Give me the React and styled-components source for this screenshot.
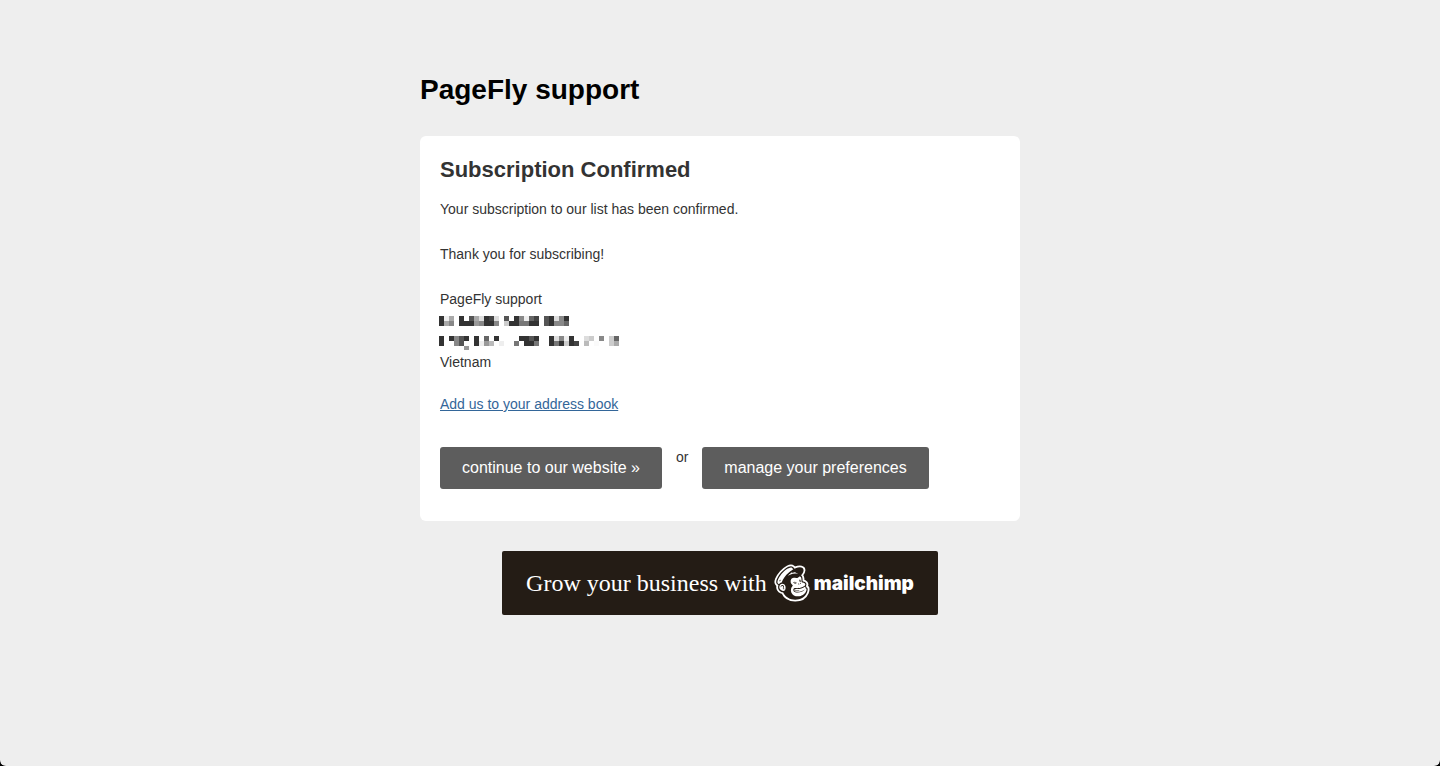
import React from 'react'
import styled, { createGlobalStyle } from 'styled-components'
import { FaMailchimp } from 'react-icons/fa'

const GlobalStyle = createGlobalStyle`
    * {
        box-sizing: border-box;
    }

    html {
        background: #000;
    }

    body {
        margin: 0;
        font-family: "Liberation Sans", Arial, sans-serif;
        font-size: 14px;
        line-height: 21px;
        color: #333;
    }
`

const Page = styled.div`
    min-height: 100vh;
    padding: 68px 20px 40px;
    background: #eee;
    border-radius: 0 0 6px 6px;
`

const Container = styled.main`
    max-width: 600px;
    margin: 0 auto;
    display: flex;
    flex-direction: column;
`

const Title = styled.h1`
    margin: 0 0 24px;
    font-size: 28px;
    line-height: 44px;
    color: #000;
`

const Card = styled.section`
    padding: 20px 20px 32px;
    background: #fff;
    border-radius: 6px;
`

const Heading = styled.h2`
    margin: 0 0 15px;
    font-size: 22px;
    line-height: 28px;
`

const Text = styled.p`
    margin: 0 0 24px;
`

const Address = styled.address`
    margin-bottom: 21px;
    font-style: normal;
`

const Mosaic = styled.svg`
    display: block;
    margin: 6px 0 2px -1px;
    shape-rendering: crispEdges;
`

const BookLink = styled.a`
    color: #336699;
`

const Actions = styled.div`
    display: flex;
    align-items: flex-start;
    flex-wrap: wrap;
    gap: 14px;
    margin-top: 32px;
`

const Button = styled.button`
    padding: 0 22px;
    border: 0;
    border-radius: 3px;
    background: #5d5d5d;
    color: #fff;
    font-family: inherit;
    font-size: 16px;
    line-height: 42px;
    cursor: pointer;
`

const Banner = styled.a`
    align-self: center;
    display: flex;
    align-items: center;
    height: 64px;
    margin-top: 30px;
    padding: 0 24px;
    border-radius: 2px;
    background: #241c15;
    color: #fff;
    text-decoration: none;
`

const Slogan = styled.span`
    font-family: "Liberation Serif", "Times New Roman", serif;
    font-size: 24px;
`

const Brand = styled.span`
    font-family: Inter, sans-serif;
    font-size: 19px;
    font-weight: 900;
`

const Freddie = styled.span`
    display: grid;
    margin: 0 4px 0 7px;

    svg {
        grid-area: 1 / 1;
        width: 36px;
        height: 38px;
        overflow: visible;
    }
`

// one character per 5px cell, the hex digit is the grey level
const cells = [
    { y: 0, row: '3ea.3.5ad34d.5.38e64.53d83' },
    { y: 5, row: '3a8.33398338.c337733.53886' },
    { y: 20, row: '3.3853.3.6.3....3353..3d8e3..dc.8.c6' },
    { y: 25, row: '3..85..3e9b.e..7.337..373c34.b.f..ca' },
    { y: 30, row: '.....9' },
]

function HiddenLines() {
  return (
    <Mosaic width="180" height="34" aria-hidden="true">
        {cells.map(({ y, row }) =>
            row.split('').map((c, i) => c !== '.' && (
                <rect key={`${y}-${i}`} x={i * 5} y={y} width="5" height="5" fill={c === 'f' ? '#fafafa' : `#${c}${c}${c}`} />
            ))
        )}
    </Mosaic>
  )
}

export default function App() {
  return (
    <>
        <GlobalStyle />
        <Page>
            <Container>
                <Title>PageFly support</Title>
                <Card>
                    <Heading>Subscription Confirmed</Heading>
                    <Text>Your subscription to our list has been confirmed.</Text>
                    <Text>Thank you for subscribing!</Text>
                    <Address>
                        PageFly support
                        <HiddenLines />
                        Vietnam
                    </Address>
                    <BookLink href="#address-book">Add us to your address book</BookLink>
                    <Actions>
                        <Button type="button">continue to our website »</Button>
                        <span>or</span>
                        <Button type="button">manage your preferences</Button>
                    </Actions>
                </Card>
                <Banner href="#mailchimp">
                    <Slogan>Grow your business with</Slogan>
                    <Freddie>
                        <FaMailchimp stroke="#fff" strokeWidth="50" strokeLinejoin="round" />
                        <svg viewBox="0 0 448 512" aria-hidden="true">
                            <circle cx="270" cy="320" r="140" fill="#fff" />
                            <path d="M75 215C100 150 150 95 215 75" fill="none" stroke="#fff" strokeWidth="60" />
                        </svg>
                        <FaMailchimp color="#241c15" />
                    </Freddie>
                    <Brand>mailchimp</Brand>
                </Banner>
            </Container>
        </Page>
    </>
  )
}
